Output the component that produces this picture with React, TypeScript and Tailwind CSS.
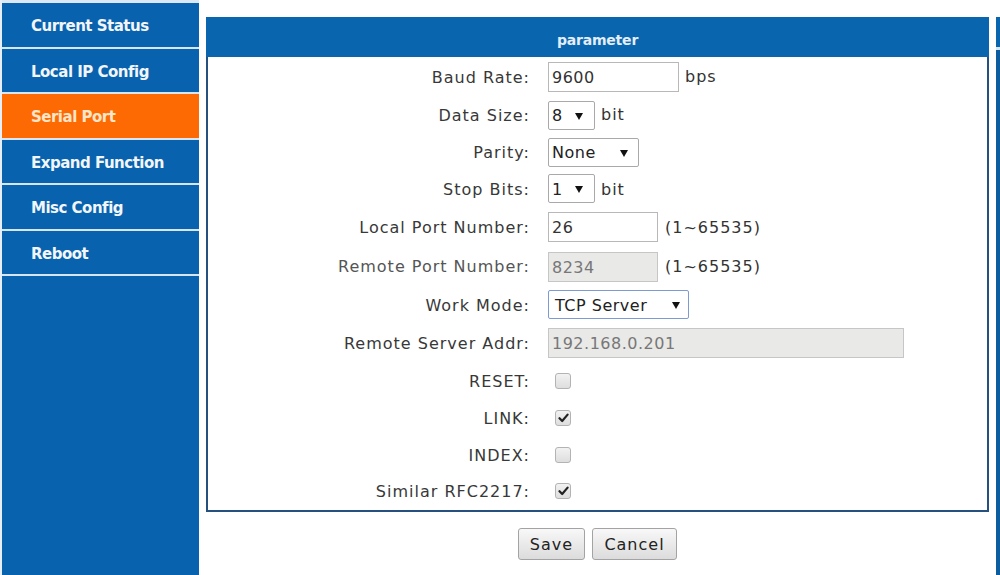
import React from "react";

const Arrow = () => (
  <svg width="8" height="7" viewBox="0 0 8 7" className="shrink-0">
    <polygon points="0,0 8,0 4,7" fill="#111" />
  </svg>
);

const Check = ({ checked }: { checked: boolean }) => (
  <div className="ml-[7px] w-[16px] h-[16px] rounded-[3px] border border-[#b3b3b3] bg-gradient-to-b from-[#f2f2f2] to-[#dedede] flex items-center justify-center">
    {checked && (
      <svg width="11" height="10" viewBox="0 0 11 10">
        <path d="M1.5 5.2 L4.2 8 L9.6 1.6" stroke="#222" strokeWidth="2.2" fill="none" strokeLinecap="round" strokeLinejoin="round" />
      </svg>
    )}
  </div>
);

const Row = ({
  label,
  h,
  labelCls = "text-[#383838]",
  children,
}: {
  label: string;
  h: string;
  labelCls?: string;
  children: React.ReactNode;
}) => (
  <div className={`flex items-center ${h}`}>
    <div className={`w-[322px] shrink-0 pt-[3px] text-right text-[16px] tracking-[1px] ${labelCls}`}>{label}</div>
    <div className="ml-[18px] flex items-center">{children}</div>
  </div>
);

const Unit = ({ children, ml }: { children: React.ReactNode; ml: string }) => (
  <span className={`${ml} pt-[2px] text-[16px] tracking-[1px] text-[#333]`}>{children}</span>
);

export default function App() {
  const menu = ["Current Status", "Local IP Config", "Serial Port", "Expand Function", "Misc Config", "Reboot"];
  return (
    <div className="w-[1000px] h-[575px] overflow-hidden bg-white flex font-['DejaVu_Sans',sans-serif]">
      <div className="w-[2px] shrink-0 bg-[#e6eff8]" />
      <div className="w-[197px] shrink-0 flex flex-col border-t-[3px] border-[#dce9f5] bg-[#0862ad]">
        {menu.map((m) => (
          <div
            key={m}
            className={`h-[45.5px] shrink-0 flex items-center pl-[29px] pt-[3px] border-b-2 border-[#d6e6f4] text-[15px] font-bold tracking-[-0.5px] ${
              m === "Serial Port" ? "bg-[#fd6a03] text-[#ffe6c8]" : "bg-[#0862ad] text-[#f2f6fb]"
            }`}
          >
            {m}
          </div>
        ))}
        <div className="flex-1 bg-[#0862ad]" />
      </div>
      <div className="w-[7px] shrink-0" />
      <div className="w-[783px] shrink-0 pt-[17px] flex flex-col">
        <div className="h-[40px] pt-[6px] bg-[#0865ae] flex items-center justify-center text-[14px] font-bold tracking-[-0.2px] text-[#e3eef9]">
          parameter
        </div>
        <div className="border-2 border-t-0 border-[#26507d] pb-[1px] flex flex-col">
          <Row label="Baud Rate:" h="h-[38px]">
            <div className="mt-[2px] w-[131px] h-[30px] pt-[2px] border border-[#b8b8b8] flex items-center px-[3px] text-[16px] tracking-[0.5px] text-[#333]">9600</div>
            <Unit ml="ml-[6px]">bps</Unit>
          </Row>
          <Row label="Data Size:" h="h-[38px]">
            <div className="mt-[2px] w-[47px] h-[29px] pt-[2px] border border-[#a9a9a9] rounded-[2px] flex items-center justify-between pl-[3px] pr-[11px] text-[16px] text-[#222]">
              <span>8</span>
              <Arrow />
            </div>
            <Unit ml="ml-[6px]">bit</Unit>
          </Row>
          <Row label="Parity:" h="h-[37px]">
            <div className="mt-[1px] w-[91px] h-[29px] pt-[2px] border border-[#a9a9a9] rounded-[2px] flex items-center justify-between pl-[3px] pr-[10px] text-[16px] tracking-[0.5px] text-[#222]">
              <span>None</span>
              <Arrow />
            </div>
          </Row>
          <Row label="Stop Bits:" h="h-[37px]">
            <div className="w-[47px] h-[29px] pt-[2px] border border-[#a9a9a9] rounded-[2px] flex items-center justify-between pl-[3px] pr-[11px] text-[16px] text-[#222]">
              <span>1</span>
              <Arrow />
            </div>
            <Unit ml="ml-[6px]">bit</Unit>
          </Row>
          <Row label="Local Port Number:" h="h-[39px]">
            <div className="mt-[1px] w-[110px] h-[30px] pt-[2px] border border-[#b8b8b8] flex items-center px-[3px] text-[16px] tracking-[0.5px] text-[#333]">26</div>
            <Unit ml="ml-[7px]">(1~65535)</Unit>
          </Row>
          <Row label="Remote Port Number:" h="h-[39px]" labelCls="text-[#555]">
            <div className="mt-[2px] w-[110px] h-[30px] pt-[2px] border border-[#c6c6c6] bg-[#e9e9e7] flex items-center px-[3px] text-[16px] tracking-[0.5px] text-[#777]">8234</div>
            <Unit ml="ml-[7px]">(1~65535)</Unit>
          </Row>
          <Row label="Work Mode:" h="h-[38px]">
            <div className="mt-[1px] w-[141px] h-[29px] pt-[2px] border border-[#7d9bd1] rounded-[2px] flex items-center justify-between pl-[6px] pr-[8px] text-[16px] tracking-[0.5px] text-[#222]">
              <span>TCP Server</span>
              <Arrow />
            </div>
          </Row>
          <Row label="Remote Server Addr:" h="h-[38px]">
            <div className="mt-[2px] w-[356px] h-[30px] pt-[2px] border border-[#c6c6c6] bg-[#e9e9e7] flex items-center px-[3px] text-[16px] tracking-[0.5px] text-[#777]">192.168.0.201</div>
          </Row>
          <Row label="RESET:" h="h-[38px]">
            <div className="mt-[2px]"><Check checked={false} /></div>
          </Row>
          <Row label="LINK:" h="h-[37px]">
            <div className="mt-[1px]"><Check checked={true} /></div>
          </Row>
          <Row label="INDEX:" h="h-[36px]">
            <div className="mt-[1px]"><Check checked={false} /></div>
          </Row>
          <Row label="Similar RFC2217:" h="h-[37px]">
            <div className="mt-[1px]"><Check checked={true} /></div>
          </Row>
        </div>
        <div className="mt-[16px] flex justify-center gap-[7px]">
          <div className="w-[67px] h-[32px] pt-[1px] border border-[#a3a3a3] rounded-[3px] bg-gradient-to-b from-[#f8f8f8] to-[#dcdcdc] flex items-center justify-center text-[16px] tracking-[1px] text-[#222]">
            Save
          </div>
          <div className="w-[85px] h-[32px] pt-[1px] border border-[#a3a3a3] rounded-[3px] bg-gradient-to-b from-[#f8f8f8] to-[#dcdcdc] flex items-center justify-center text-[16px] tracking-[1px] text-[#222]">
            Cancel
          </div>
        </div>
      </div>
      <div className="w-[7px] shrink-0" />
      <div className="w-[4px] shrink-0 flex flex-col pt-[17px]">
        <div className="h-[30px] bg-[#0865ae]" />
        <div className="h-[3px] bg-[#d6e6f4]" />
        <div className="flex-1 bg-[#0c5d9f]" />
      </div>
    </div>
  );
}
